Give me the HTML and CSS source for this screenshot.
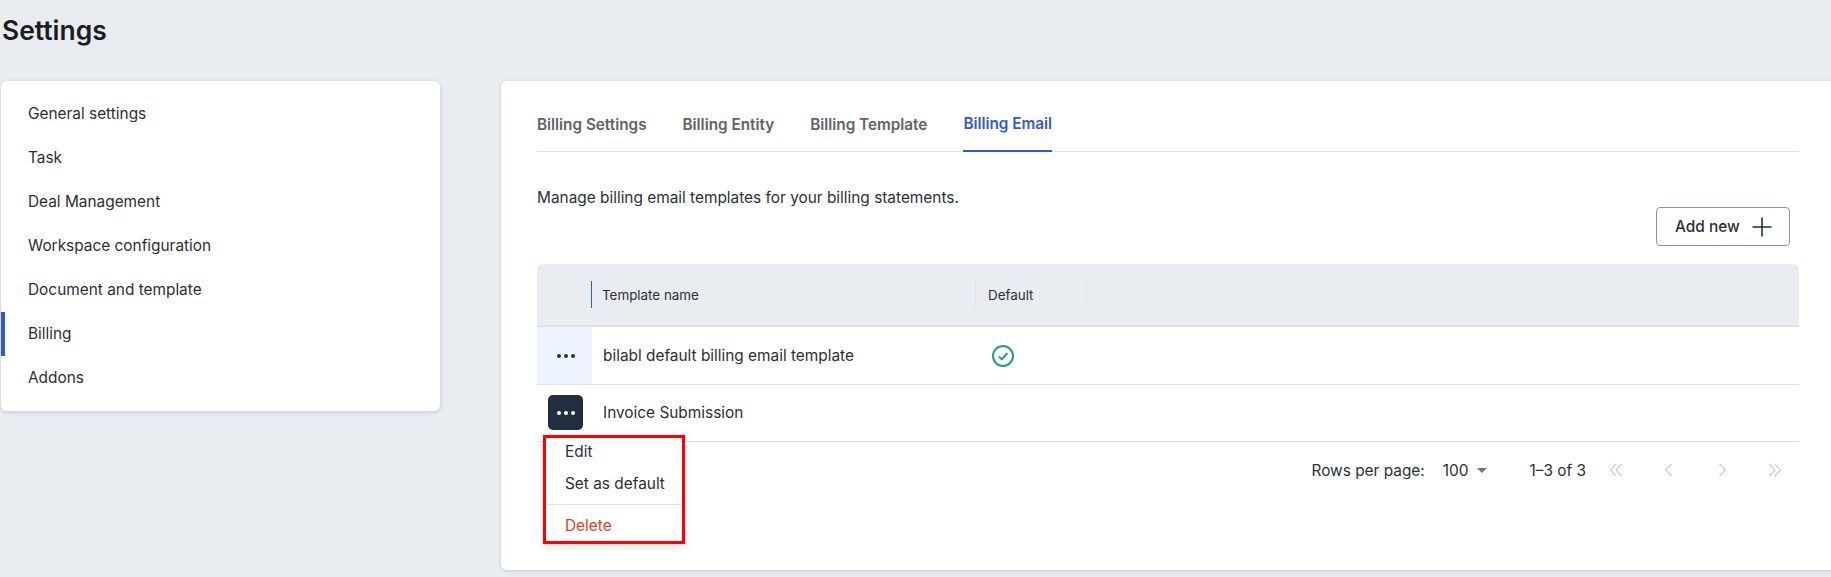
FILE: index.html
```html
<!DOCTYPE html>
<html lang="en">
<head>
    <meta charset="UTF-8">
    <title>Settings</title>
    <link rel="stylesheet" href="styles.css">
</head>
<body>
    <h1 class="page-title">Settings</h1>

    <div class="layout">
        <ul class="side-nav">
            <li class="side-item">General settings</li>
            <li class="side-item">Task</li>
            <li class="side-item">Deal Management</li>
            <li class="side-item">Workspace configuration</li>
            <li class="side-item">Document and template</li>
            <li class="side-item active">Billing</li>
            <li class="side-item">Addons</li>
        </ul>

        <main class="panel">
            <nav class="tabs">
                <span class="tab">Billing Settings</span>
                <span class="tab">Billing Entity</span>
                <span class="tab">Billing Template</span>
                <span class="tab active">Billing Email</span>
            </nav>

            <p class="intro">Manage billing email templates for your billing statements.</p>

            <div class="toolbar">
                <button class="add-btn">
                    Add new
                    <svg width="20" height="20" viewBox="0 0 20 20" fill="none" stroke="#1f2d3d" stroke-width="1.6">
                        <path d="M10 0.5V19.5M0.5 10H19.5"/>
                    </svg>
                </button>
            </div>

            <div class="table">
                <div class="table-head">
                    <div class="col-action"></div>
                    <div class="col-name head-cell first">Template name</div>
                    <div class="col-default head-cell">Default</div>
                </div>

                <div class="table-row">
                    <div class="col-action tinted">
                        <span class="dots"><i></i><i></i><i></i></span>
                    </div>
                    <div class="col-name">bilabl default billing email template</div>
                    <div class="col-default">
                        <svg class="check" width="22" height="22" viewBox="0 0 22 22" fill="none" stroke="#2a9d7c" stroke-width="2">
                            <circle cx="11" cy="11" r="10"/>
                            <path d="M6.8 11.4L9.8 14.4L15.4 8"/>
                        </svg>
                    </div>
                </div>

                <div class="table-row last">
                    <div class="col-action">
                        <button class="dots-btn">
                            <span class="dots light"><i></i><i></i><i></i></span>
                        </button>
                    </div>
                    <div class="col-name">Invoice Submission</div>
                </div>

                <!-- row menu, opened from the second row -->
                <div class="row-menu">
                    <div class="menu-item first">Edit</div>
                    <div class="menu-item">Set as default</div>
                    <div class="menu-line"></div>
                    <div class="menu-item danger">Delete</div>
                </div>
            </div>

            <div class="pager">
                <span class="pager-label">Rows per page:</span>
                <span class="pager-size">100<span class="caret"></span></span>
                <span class="pager-count">1–3 of 3</span>
                <div class="pager-icons">
                    <svg width="12" height="14" viewBox="0 0 12 14"><path d="M6 1L0.5 7L6 13M11.5 1L6 7L11.5 13"/></svg>
                    <svg width="7" height="14" viewBox="0 0 7 14"><path d="M6.5 1L0.5 7L6.5 13"/></svg>
                    <svg class="next" width="7" height="14" viewBox="0 0 7 14"><path d="M0.5 1L6.5 7L0.5 13"/></svg>
                    <svg width="12" height="14" viewBox="0 0 12 14"><path d="M0.5 1L6 7L0.5 13M6 1L11.5 7L6 13"/></svg>
                </div>
            </div>
        </main>
    </div>
</body>
</html>
```

FILE: styles.css
```css
:root {
    --page-bg: #e9ecf1;
    --text: #2a3038;
    --muted: #5f6368;
    --blue: #2f5bce;
    --line: #dfe1e5;
}

* {
    box-sizing: border-box;
}

html,
body {
    height: 100%;
    overflow: hidden;
}

body {
    margin: 0;
    padding-left: 1px;
    background: var(--page-bg);
    color: var(--text);
    font-family: Inter, "Liberation Sans", sans-serif;
    font-size: 15.4px;
}

.page-title {
    margin: 0;
    padding: 15px 0 0 1px;
    height: 81px;
    font-size: 26.4px;
    line-height: 30px;
    font-weight: 600;
    color: #1a1d21;
}

.layout {
    display: flex;
    align-items: flex-start;
    gap: 61px;
}

.side-nav {
    list-style: none;
    width: 439px;
    flex-shrink: 0;
    margin: 0;
    padding: 11px 0;
    background: #fff;
    border-radius: 6px;
    box-shadow: 0 1px 4px rgba(30, 40, 60, 0.18);
}

.side-item {
    height: 44px;
    padding-left: 27px;
    line-height: 44px;
}

.side-item.active {
    padding-left: 23px;
    border-left: 4px solid var(--blue);
}

.panel {
    flex: 1;
    height: 489px;
    margin-right: -10px;
    padding: 25px 42px 0 36px;
    background: #fff;
    border-radius: 6px;
    box-shadow: 0 1px 4px rgba(30, 40, 60, 0.14);
}

.tabs {
    display: flex;
    gap: 36px;
    height: 46px;
    border-bottom: 1px solid var(--line);
}

.tab {
    height: 46px;
    line-height: 37px;
    font-size: 15.3px;
    font-weight: 600;
    color: var(--muted);
}

.tab.active {
    line-height: 35px;
    color: var(--blue);
    border-bottom: 2px solid var(--blue);
}

.intro {
    margin: 36px 0 0;
    line-height: 20px;
}

.toolbar {
    display: flex;
    justify-content: flex-end;
    padding-right: 9px;
    margin-top: -1px;
}

.add-btn {
    display: flex;
    align-items: center;
    gap: 12px;
    width: 134px;
    height: 39px;
    padding: 0 0 0 18px;
    background: #fff;
    border: 1px solid #8c96a1;
    border-radius: 4px;
    color: var(--text);
    font: 500 15.4px Inter, "Liberation Sans", sans-serif;
}

.table {
    position: relative;
    margin-top: 18px;
}

.table-head {
    display: flex;
    align-items: center;
    height: 63px;
    background: var(--page-bg);
    border-radius: 6px 6px 0 0;
    border-bottom: 2px solid var(--line);
    font-size: 13.4px;
}

.table-row {
    display: flex;
    align-items: stretch;
    height: 58px;
    border-bottom: 1px solid var(--line);
}

.table-row.last {
    height: 57px;
    padding-bottom: 1px;
}

.col-action {
    display: flex;
    align-items: center;
    justify-content: center;
    width: 55px;
    padding-left: 2px;
    flex-shrink: 0;
}

.col-action.tinted {
    background: #eef4fd;
}

.col-name {
    display: flex;
    align-items: center;
    width: 385px;
    padding-left: 11px;
    flex-shrink: 0;
}

.col-default {
    display: flex;
    align-items: center;
    width: 111px;
    padding-left: 12px;
}

.head-cell {
    height: 27px;
    border-right: 1px solid #e0e3e8;
}

.head-cell.first {
    margin-left: -1px;
    padding-left: 10px;
    border-left: 1px solid var(--blue);
}

.check {
    margin-left: 3px;
}

.dots {
    display: flex;
    gap: 3px;
}

.dots i {
    width: 4px;
    height: 4px;
    border-radius: 50%;
    background: var(--text);
}

.dots.light i {
    background: #fff;
}

.dots-btn {
    display: flex;
    align-items: center;
    justify-content: center;
    width: 35px;
    height: 35px;
    padding: 0;
    border: 0;
    border-radius: 5px;
    background: #1f2f40;
}

.row-menu {
    position: absolute;
    left: 6px;
    top: 171px;
    width: 142px;
    height: 109px;
    background: #fff;
    border: 3px solid #ff0000;
    box-shadow: 0 3px 8px rgba(30, 40, 60, 0.15);
}

.menu-item {
    height: 31px;
    padding-left: 19px;
    line-height: 28px;
}

.menu-item.first {
    height: 32px;
}

.menu-item.danger {
    color: #e2401f;
}

.menu-line {
    height: 1px;
    margin: 3px 0 7px;
    background: var(--line);
}

.pager {
    display: flex;
    align-items: center;
    justify-content: flex-end;
    height: 20px;
    margin-top: 18px;
    padding-right: 18px;
}

.pager-size {
    display: flex;
    align-items: center;
    margin-left: 18px;
}

.caret {
    width: 0;
    height: 0;
    margin-left: 9px;
    border-left: 5.5px solid transparent;
    border-right: 5.5px solid transparent;
    border-top: 5.5px solid #757575;
}

.pager-count {
    margin-left: 42px;
}

.pager-icons {
    display: flex;
    gap: 43px;
    margin-left: 24px;
}

.pager-icons svg {
    fill: none;
    stroke: #c8ccd0;
    stroke-width: 1.2;
}

.pager-icons .next {
    margin-left: 4px;
}
```
